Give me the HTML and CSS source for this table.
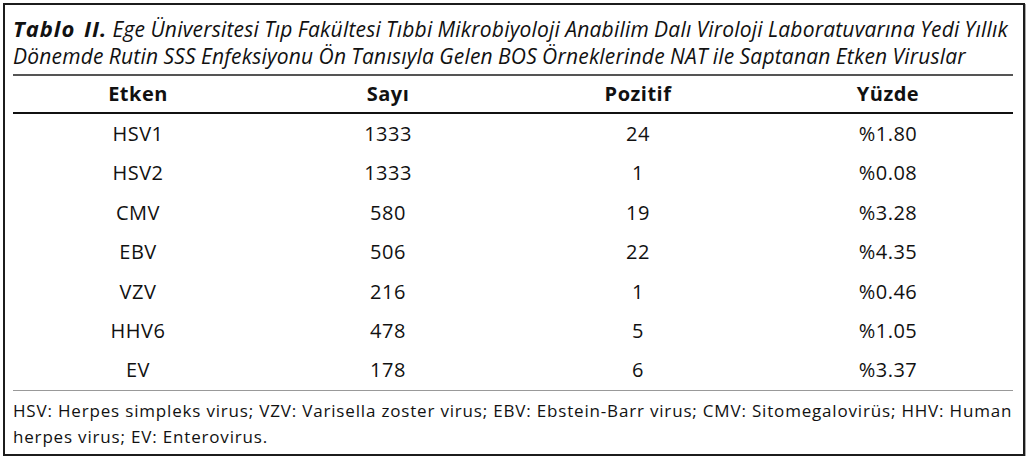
FILE: index.html
```html
<!DOCTYPE html>
<html lang="tr">
<head>
<meta charset="utf-8">
<link rel="stylesheet" href="styles.css">
</head>
<body>
<div class="frame">
  <p class="caption"><b>Tablo II.</b> Ege Üniversitesi Tıp Fakültesi Tıbbi Mikrobiyoloji Anabilim Dalı Viroloji Laboratuvarına Yedi Yıllık Dönemde Rutin SSS Enfeksiyonu Ön Tanısıyla Gelen BOS Örneklerinde NAT ile Saptanan Etken Viruslar</p>
  <table class="data">
    <thead>
      <tr><th>Etken</th><th>Sayı</th><th>Pozitif</th><th>Yüzde</th></tr>
    </thead>
    <tbody>
      <tr><td>HSV1</td><td>1333</td><td>24</td><td>%1.80</td></tr>
      <tr><td>HSV2</td><td>1333</td><td>1</td><td>%0.08</td></tr>
      <tr><td>CMV</td><td>580</td><td>19</td><td>%3.28</td></tr>
      <tr><td>EBV</td><td>506</td><td>22</td><td>%4.35</td></tr>
      <tr><td>VZV</td><td>216</td><td>1</td><td>%0.46</td></tr>
      <tr><td>HHV6</td><td>478</td><td>5</td><td>%1.05</td></tr>
      <tr><td>EV</td><td>178</td><td>6</td><td>%3.37</td></tr>
    </tbody>
  </table>
  <p class="note">HSV: Herpes simpleks virus; VZV: Varisella zoster virus; EBV: Ebstein-Barr virus; CMV: Sitomegalovirüs; HHV: Human herpes virus; EV: Enterovirus.</p>
</div>
</body>
</html>
```

FILE: styles.css
```css
html, body {
  margin: 0;
  padding: 0;
  background: #fff;
}
body {
  font-family: "Open Sans", "Noto Sans", sans-serif;
  color: #111;
}
.frame {
  margin: 3px 0 0 3px;
  width: 1022px;
  height: 453px;
  border: 2px solid #1c1c1c;
  box-shadow: 1px 1px 0 #aaa;
  padding: 0 8px;
  box-sizing: border-box;
}
.caption {
  margin: 0 0 4px;
  padding-top: 10px;
  font-style: italic;
  font-size: 21px;
  line-height: 27px;
  letter-spacing: 0.2px;
  word-spacing: -0.5px;
}
.caption b {
  font-weight: 700;
  font-size: 22px;
  letter-spacing: 1px;
  word-spacing: 2px;
}
.data {
  width: 1000px;
  border-collapse: separate;
  border-spacing: 0;
  table-layout: fixed;
  font-size: 20px;
  letter-spacing: 0.5px;
}
.data th, .data td {
  text-align: center;
  padding: 0;
}
.data th {
  line-height: 36px;
  font-weight: 700;
  border-top: 2px solid #555;
  border-bottom: 2px solid #111;
}
.data td {
  line-height: 39.4px;
}
.data tbody tr:last-child td {
  border-bottom: 1px solid #999;
}
.note {
  margin: 0;
  padding-top: 7px;
  font-size: 17px;
  line-height: 26px;
  letter-spacing: 0.82px;
}
```
